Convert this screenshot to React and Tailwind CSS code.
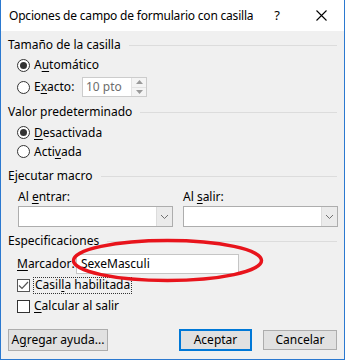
import React from "react";

const font = { fontFamily: '"Segoe UI", "Noto Sans", "Liberation Sans", sans-serif' };

function U({ children }) {
  return <span className="underline underline-offset-2">{children}</span>;
}

function SectionTitle({ children, className = "" }) {
  return (
    <div className={`flex h-[20px] items-center gap-[8px] pl-[7px] pr-[7px] ${className}`}>
      <span className="whitespace-nowrap">{children}</span>
      <div className="h-px flex-1 bg-[#dcdcdc]" />
    </div>
  );
}

function Radio({ checked, children, className = "" }) {
  return (
    <div className={`flex items-center pl-[16px] ${className}`}>
      <div className="flex h-[13px] w-[13px] items-center justify-center rounded-full border border-[#333333] bg-white">
        {checked && <div className="h-[7px] w-[7px] rounded-full bg-[#333333]" />}
      </div>
      <span className="ml-[4px] whitespace-nowrap">{children}</span>
    </div>
  );
}

function Combo() {
  return (
    <div className="flex h-[21px] w-[155px] border border-[#adadad] bg-white">
      <div className="flex-1" />
      <div className="flex w-[16px] items-center justify-center border-l border-[#dcdcdc] bg-[#ebebeb]">
        <svg width="9" height="6" viewBox="0 0 9 6">
          <path d="M1 1 L4.5 4.5 L8 1" stroke="#707070" strokeWidth="1" fill="none" />
        </svg>
      </div>
    </div>
  );
}

export default function App() {
  return (
    <div
      className="relative flex h-[360px] w-[345px] flex-col overflow-hidden border-x border-b border-[#2b79d0] bg-[#f0f0f0] text-[12px] leading-none text-black"
      style={font}
    >
      {/* barra de titulo */}
      <div className="flex h-[31px] shrink-0 items-center bg-white pl-[8px]">
        <span className="text-[12px] tracking-[-0.2px] whitespace-nowrap">Opciones de campo de formulario con casilla</span>
        <div className="flex-1" />
        <span className="mr-[36px] text-[13px]">?</span>
        <svg width="11" height="11" viewBox="0 0 11 11" className="mr-[17px]">
          <path d="M0.5 0.5 L10.5 10.5 M10.5 0.5 L0.5 10.5" stroke="#000" strokeWidth="1.1" />
        </svg>
      </div>

      <div className="flex flex-col pt-[4px]">
        {/* TAMANO */}
        <SectionTitle>Tamaño de la casilla</SectionTitle>
        <Radio checked className="h-[20px]">
          A<U>u</U>tomático
        </Radio>
        <div className="mt-[2px] flex h-[20px] items-center">
          <Radio className="w-[81px]">
            E<U>x</U>acto:
          </Radio>
          <div className="flex h-[20px] w-[65px] border border-[#cccccc] bg-white">
            <span className="flex flex-1 items-center pl-[3px] text-[#6d6d6d]">10 pto</span>
            <div className="flex w-[15px] flex-col border-l border-[#e3e3e3] bg-[#f4f4f4]">
              <div className="flex flex-1 items-center justify-center border-b border-[#e3e3e3]">
                <svg width="7" height="4" viewBox="0 0 7 4"><path d="M0 4 L3.5 0 L7 4 Z" fill="#9a9a9a" /></svg>
              </div>
              <div className="flex flex-1 items-center justify-center">
                <svg width="7" height="4" viewBox="0 0 7 4"><path d="M0 0 L3.5 4 L7 0 Z" fill="#9a9a9a" /></svg>
              </div>
            </div>
          </div>
        </div>

        {/* VALOR */}
        <SectionTitle className="mt-[5px]">Valor predeterminado</SectionTitle>
        <Radio checked className="mt-[1px] h-[19px]">
          <U>D</U>esactivada
        </Radio>
        <Radio className="h-[19px]">
          Acti<U>v</U>ada
        </Radio>

        {/* MACRO */}
        <SectionTitle className="mt-[5px]">Ejecutar macro</SectionTitle>
        <div className="mt-[2px] flex h-[18px] items-center pl-[17px]">
          <span className="w-[165px]">
            Al <U>e</U>ntrar:
          </span>
          <span>
            Al <U>s</U>alir:
          </span>
        </div>
        <div className="flex gap-[10px] pl-[17px]">
          <Combo />
          <Combo />
        </div>

        {/* ESPECIFICACIONES */}
        <SectionTitle className="mt-[4px]">Especificaciones</SectionTitle>
        <div className="mt-[3px] flex h-[20px] items-center pl-[16px]">
          <span className="w-[59px]">
            <U>M</U>arcador:
          </span>
          <div className="flex h-[20px] w-[163px] items-center border border-[#c5c5c5] bg-white pl-[4px]">
            SexeMasculi
          </div>
        </div>
        <div className="mt-[1px] flex h-[20px] items-center pl-[16px]">
          <div className="flex h-[13px] w-[13px] items-center justify-center border border-[#555555] bg-white">
            <svg width="11" height="9" viewBox="0 0 11 9">
              <path d="M1 4.5 L4 7.5 L10 1" stroke="#555" strokeWidth="1.2" fill="none" />
            </svg>
          </div>
          <span className="ml-[3px] flex h-[17px] items-center border border-dotted border-[#333333] px-[1px]">
            Casil<U>l</U>a habilitada
          </span>
        </div>
        <div className="mt-[1px] flex h-[20px] items-center pl-[16px]">
          <div className="h-[13px] w-[13px] border border-[#333333] bg-white" />
          <span className="ml-[4px]">
            <U>C</U>alcular al salir
          </span>
        </div>

        {/* BOTONES */}
        <div className="mt-[13px] flex h-[22px] items-center pl-[7px] pr-[7px]">
          <button className="flex h-[22px] w-[100px] items-center justify-center border border-[#adadad] bg-[#e1e1e1]">
            A<U>g</U>regar ayuda...
          </button>
          <div className="flex-1" />
          <button className="flex h-[22px] w-[73px] items-center justify-center border-2 border-[#0078d7] bg-[#e1e1e1]">
            Aceptar
          </button>
          <button className="ml-[11px] flex h-[20px] w-[74px] items-center justify-center border border-[#adadad] bg-[#e1e1e1]">
            Cancelar
          </button>
        </div>
      </div>

      {/* circulo rojo encima */}
      <svg className="pointer-events-none absolute left-[68px] top-[237px]" width="200" height="48" viewBox="0 0 200 48">
        <ellipse cx="98.5" cy="23.5" rx="94" ry="20" stroke="#e8141c" strokeWidth="3.5" fill="none" />
      </svg>
    </div>
  );
}
